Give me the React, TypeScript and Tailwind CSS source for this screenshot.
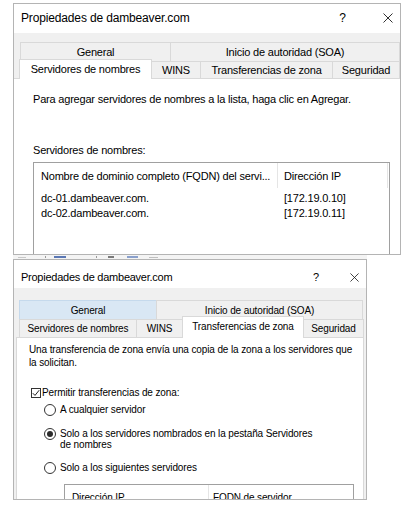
import React from "react";

const CloseIcon = ({ size }: { size: number }) => (
  <svg width={size} height={size} viewBox="0 0 10 10" className="block">
    <path d="M0.5 0.5 L9.5 9.5 M9.5 0.5 L0.5 9.5" stroke="#1a1a1a" strokeWidth="0.9" fill="none" />
  </svg>
);

const Radio = ({ checked }: { checked?: boolean }) => (
  <span className="w-[12px] h-[12px] shrink-0 rounded-full border border-[#333333] bg-white flex items-center justify-center">
    {checked && <span className="w-[6px] h-[6px] rounded-full bg-[#2b2b2b]" />}
  </span>
);

const DialogOne = () => (
  <div className="ml-[13px] mt-[3px] w-[388px] h-[252px] border border-[#b4b4b4] flex flex-col bg-[#f0f0f0] overflow-hidden">
    <div className="h-[29px] shrink-0 bg-white flex items-center pl-[7px] pb-[2px]">
      <span className="text-[12px] tracking-[-0.15px]">Propiedades de dambeaver.com</span>
      <span className="ml-auto mr-[37px] text-[12px]">?</span>
      <span className="mr-[7px]">
        <CloseIcon size={10} />
      </span>
    </div>
    <div className="flex-1 flex flex-col pt-[9px] text-[11px] tracking-[-0.2px]">
      <div className="flex ml-[6px]">
        <div className="w-[151px] h-[19px] border-t border-l border-r border-[#d9d9d9] flex items-center justify-center">General</div>
        <div className="-ml-px w-[230px] h-[19px] border-t border-l border-r border-[#d9d9d9] flex items-center justify-center">Inicio de autoridad (SOA)</div>
      </div>
      <div className="flex items-end h-[17px] ml-[5px]">
        <div className="relative z-10 -mb-px w-[133px] h-[20px] bg-white border-t border-l border-r border-[#d9d9d9] flex items-center justify-center">Servidores de nombres</div>
        <div className="-ml-px w-[50px] h-[17px] border-t border-l border-r border-[#d9d9d9] flex items-center justify-center">WINS</div>
        <div className="-ml-px w-[133px] h-[17px] border-t border-l border-r border-[#d9d9d9] flex items-center justify-center">Transferencias de zona</div>
        <div className="-ml-px w-[68px] h-[17px] border-t border-l border-r border-[#d9d9d9] flex items-center justify-center">Seguridad</div>
      </div>
      <div className="flex-1 flex flex-col bg-white border-t border-[#d9d9d9] pl-[19px] leading-[14px]">
        <p className="mt-[13px]">Para agregar servidores de nombres a la lista, haga clic en Agregar.</p>
        <p className="mt-[37px]">Servidores de nombres:</p>
        <div className="mt-[5px] w-[357px] flex-1 border border-b-0 border-[#a0a0a0]">
          <div className="flex h-[25px]">
            <div className="w-[244px] pl-[7px] border-r border-[#e5e5e5] flex items-center">Nombre de dominio completo (FQDN) del servi...</div>
            <div className="w-[110px] pl-[6px] border-r border-[#e5e5e5] flex items-center">Dirección IP</div>
          </div>
          <div className="pt-[2px]">
            <div className="flex h-[15px] items-center">
              <div className="w-[244px] pl-[7px]">dc-01.dambeaver.com.</div>
              <div className="pl-[6px]">[172.19.0.10]</div>
            </div>
            <div className="flex h-[15px] items-center">
              <div className="w-[244px] pl-[7px]">dc-02.dambeaver.com.</div>
              <div className="pl-[6px]">[172.19.0.11]</div>
            </div>
          </div>
        </div>
      </div>
    </div>
  </div>
);

const Strip = () => (
  <div className="ml-[13px] w-[354px] h-[4px] flex items-center bg-[#f4f4f4]">
    <span className="ml-[5px] w-[8px] h-px bg-[#c8c8c8]" />
    <span className="ml-[19px] w-px h-[2px] bg-[#9a9a9a]" />
    <span className="ml-[8px] w-[12px] h-[2px] bg-[#5b78b5]" />
    <span className="ml-[30px] w-px h-[2px] bg-[#9a9a9a]" />
    <span className="ml-[11px] w-[6px] h-[2px] bg-[#7a7a7a]" />
    <span className="ml-[13px] w-[11px] h-[2px] bg-[#8aa0cc]" />
    <span className="ml-[11px] w-[9px] h-px bg-[#c0c0c0]" />
  </div>
);

const DialogTwo = () => (
  <div className="ml-[13px] w-[354px] h-[241px] border border-[#b4b4b4] flex flex-col bg-[#f0f0f0] overflow-hidden">
    <div className="h-[28px] shrink-0 bg-white flex items-center pl-[7px] pt-[6px]">
      <span className="text-[11px] tracking-[-0.25px]">Propiedades de dambeaver.com</span>
      <span className="ml-auto mr-[31px] text-[11px]">?</span>
      <span className="mr-[7px]">
        <CloseIcon size={9} />
      </span>
    </div>
    <div className="flex-1 flex flex-col pt-[12px] px-[2px] text-[10px] tracking-[-0.12px]">
      <div className="flex ml-[3px]">
        <div className="w-[138px] h-[19px] bg-[#d9e7f4] border-t border-l border-r border-[#c5d9ec] flex items-center justify-center">General</div>
        <div className="-ml-px w-[207px] h-[19px] border-t border-l border-r border-[#d9d9d9] flex items-center justify-center">Inicio de autoridad (SOA)</div>
      </div>
      <div className="flex items-end h-[18px] ml-[3px]">
        <div className="w-[118px] h-[18px] border-t border-l border-r border-[#d9d9d9] flex items-center justify-center">Servidores de nombres</div>
        <div className="-ml-px w-[47px] h-[18px] border-t border-l border-r border-[#d9d9d9] flex items-center justify-center">WINS</div>
        <div className="relative z-10 -ml-px -mb-px w-[122px] h-[22px] bg-white border-t border-l border-r border-[#d9d9d9] flex items-center justify-center pb-[3px]">Transferencias de zona</div>
        <div className="-ml-px w-[61px] h-[18px] border-t border-l border-r border-[#d9d9d9] flex items-center justify-center">Seguridad</div>
      </div>
      <div className="flex-1 flex flex-col bg-white border border-b-0 border-[#d9d9d9] pl-[12px]">
        <p className="mt-[5px] leading-[13px]">
          Una transferencia de zona envía una copia de la zona a los servidores que
          <br />
          la solicitan.
        </p>
        <div className="mt-[17px] h-[13px] ml-[2px] flex items-center">
          <span className="w-[10px] h-[10px] border border-[#333333] bg-white flex items-center justify-center">
            <svg width="8" height="8" viewBox="0 0 8 8" className="block">
              <path d="M0.8 4.2 L3 6.4 L7.2 1.2" stroke="#222" strokeWidth="1" fill="none" />
            </svg>
          </span>
          <span className="ml-[1px]">Permitir transferencias de zona:</span>
        </div>
        <div className="mt-[4px] h-[13px] ml-[15px] flex items-center">
          <Radio />
          <span className="ml-[4px]">A cualquier servidor</span>
        </div>
        <div className="mt-[12px] ml-[15px] flex items-start">
          <Radio checked />
          <span className="ml-[4px] leading-[11px]">
            Solo a los servidores nombrados en la pestaña Servidores
            <br />
            de nombres
          </span>
        </div>
        <div className="mt-[11px] h-[13px] ml-[15px] flex items-center">
          <Radio />
          <span className="ml-[4px]">Solo a los siguientes servidores</span>
        </div>
        <div className="mt-[10px] ml-[35px] w-[290px] flex-1 border border-b-0 border-[#a0a0a0]">
          <div className="flex h-[24px]">
            <div className="w-[144px] pl-[7px] border-r border-[#e5e5e5] flex items-center">Dirección IP</div>
            <div className="pl-[4px] flex items-center">FQDN de servidor</div>
          </div>
        </div>
      </div>
    </div>
  </div>
);

export default function App() {
  return (
    <div className="w-[402px] h-[507px] bg-white overflow-hidden font-['Liberation_Sans',Arial,sans-serif] text-black">
      <DialogOne />
      <Strip />
      <DialogTwo />
    </div>
  );
}
